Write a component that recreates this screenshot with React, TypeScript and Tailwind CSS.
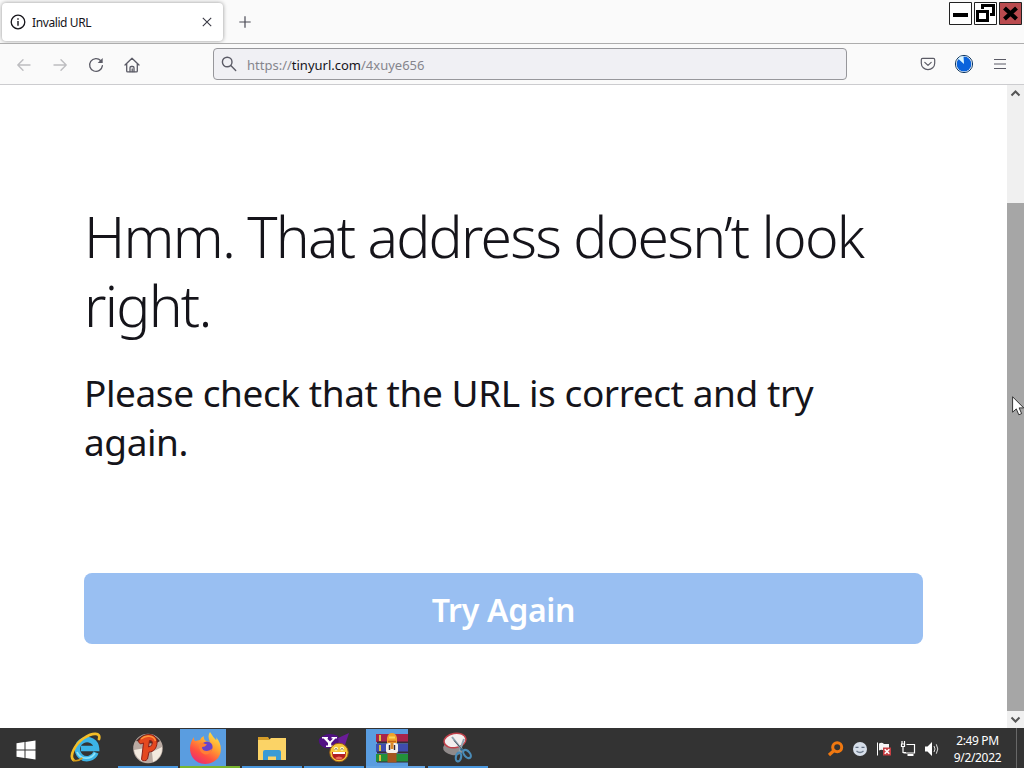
import type { ReactNode } from 'react';

function InfoIcon() {
  return (
    <svg width="16" height="16" viewBox="0 0 16 16" fill="none" stroke="#15141a" className="shrink-0">
      <circle cx="8" cy="8" r="6.8" strokeWidth="1.3" />
      <path d="M8 7v4.7M8 4.2v1.5" strokeWidth="1.4" />
    </svg>
  );
}

function ArrowIcon({ flip = false }: { flip?: boolean }) {
  return (
    <svg
      width="16"
      height="16"
      viewBox="0 0 16 16"
      fill="none"
      stroke="#bdbdc0"
      strokeWidth="1.4"
      strokeLinecap="round"
      strokeLinejoin="round"
      className={flip ? 'rotate-180' : ''}
    >
      <path d="M14 8H1.8M7 2.8L1.8 8 7 13.2" />
    </svg>
  );
}

function ReloadIcon() {
  return (
    <svg width="16" height="16" viewBox="0 0 16 16" fill="none" stroke="#5b5b66" strokeWidth="1.3" strokeLinecap="round">
      <path d="M12.8 3.7A6.4 6.4 0 1 0 14.4 8.6" />
      <path d="M14.7 1v5h-5z" fill="#5b5b66" stroke="none" />
    </svg>
  );
}

function HomeIcon() {
  return (
    <svg width="16" height="16" viewBox="0 0 16 16" fill="none" stroke="#5b5b66" strokeWidth="1.3" strokeLinejoin="round" strokeLinecap="round">
      <path d="M1 8l7-6.8L15 8M2.7 6.6v7.3q0 1 1 1h8.6q1 0 1-1V6.6" />
      <path d="M6 14.7v-4q0-1.2 1.2-1.2h1.6q1.2 0 1.2 1.2v4M8.2 12v2.7" />
    </svg>
  );
}

function SearchIcon() {
  return (
    <svg width="16" height="16" viewBox="0 0 16 16" fill="none" stroke="#5b5b66" strokeWidth="1.4" strokeLinecap="round">
      <circle cx="6.2" cy="6" r="4.8" />
      <path d="M9.8 9.6l4.9 4.9" />
    </svg>
  );
}

function PocketIcon() {
  return (
    <svg width="16" height="16" viewBox="0 0 16 16" fill="none" stroke="#5b5b66" strokeWidth="1.2" strokeLinecap="round" strokeLinejoin="round">
      <path d="M2.6 2.4h10.8q1.3 0 1.3 1.3v3.5a6.7 6.5 0 0 1-13.4 0V3.7q0-1.3 1.3-1.3z" />
      <path d="M4.8 6.4L8 9.4l3.2-3" />
    </svg>
  );
}

function ProfileIcon() {
  return (
    <svg width="20" height="20" viewBox="0 0 20 20">
      <circle cx="10" cy="10" r="8.6" fill="#fff" stroke="#123a63" strokeWidth="1" />
      <circle cx="10" cy="10" r="7.4" fill="#0a63dc" />
      <path d="M10 10L3.9 4.5A8 8 0 0 1 9.5 2.2z" fill="#d8f5ff" />
    </svg>
  );
}

function MenuIcon() {
  return (
    <svg width="14" height="12" viewBox="0 0 14 12" stroke="#5b5b66" strokeWidth="1.2">
      <path d="M1 1.5h12M1 6h12M1 10.5h12" />
    </svg>
  );
}

function WindowControls() {
  return (
    <svg width="74" height="24" viewBox="0 0 74 24" fill="none">
      <g stroke="#222" fill="#fff">
        <path d="M.5.5h22v22H.5zM25.5.5h22v22h-22z" />
        <path d="M50.5.5h22v22h-22z" fill="#ba4b4f" />
      </g>
      <path d="M4 13h15" stroke="#000" strokeWidth="4" />
      <g stroke="#000" strokeWidth="3">
        <path d="M33.5 7V3.5h11v9H41" />
        <path d="M28.5 9.5h10v9h-10z" fill="#fff" />
      </g>
      <path d="M55.5 6l12 11M67.5 6l-12 11" stroke="#000" strokeWidth="4.2" />
    </svg>
  );
}

function TabStrip() {
  return (
    <div className="flex h-[43px] shrink-0 items-start justify-between bg-[#fafafa]">
      <div className="flex items-center pt-[3px] pl-[2px]">
        <div className="flex h-[38px] w-[221px] items-center rounded-[4px] bg-white pr-[10px] pl-[8px] shadow-[0_0_4px_rgba(0,0,0,0.4)]">
          <InfoIcon />
          <span className="ml-[6px] flex-1 pt-px text-[12px] tracking-[-0.4px] text-[#15141a]">Invalid URL</span>
          <svg width="12" height="12" viewBox="0 0 12 12" stroke="#3a3944" strokeWidth="1.1">
            <path d="M1.8 1.8l8.4 8.4M10.2 1.8l-8.4 8.4" />
          </svg>
        </div>
        <svg width="12" height="12" viewBox="0 0 12 12" stroke="#4a4a55" strokeWidth="1.2" className="ml-[16px]">
          <path d="M6 .3v11.4M.3 6h11.4" />
        </svg>
      </div>
      <div className="pt-[2px] pr-[1px]">
        <WindowControls />
      </div>
    </div>
  );
}

function Toolbar() {
  return (
    <div className="flex h-[42px] shrink-0 items-center border-t border-b border-t-[#adadad] border-b-[#cccccf] bg-[#fafafa]">
      <div className="flex w-[213px] items-center gap-5 pt-px pl-[16px]">
        <ArrowIcon />
        <ArrowIcon flip />
        <ReloadIcon />
        <HomeIcon />
      </div>
      <div className="flex h-[32px] w-[634px] items-center rounded-[4px] border border-[#97979b] bg-[#f0f0f4] pl-[7px]">
        <SearchIcon />
        <span className="ml-[10px] pt-[3px] text-[13px] text-[#85858c]">
          https://<span className="text-[#15141a]">tinyurl.com</span>/4xuye656
        </span>
      </div>
      <div className="ml-[73px] flex items-center">
        <PocketIcon />
        <div className="ml-[18px]">
          <ProfileIcon />
        </div>
        <div className="ml-[19px]">
          <MenuIcon />
        </div>
      </div>
    </div>
  );
}

function Scrollbar() {
  return (
    <div className="flex w-[17px] flex-col items-center bg-[#f0f0f0]">
      <svg width="17" height="17" viewBox="0 0 17 17" fill="none" stroke="#555" strokeWidth="2">
        <path d="M4.5 10.5l4-4 4 4" />
      </svg>
      <div className="mt-[101px] h-[508px] w-full bg-[#a6a6a6]" />
      <svg width="17" height="17" viewBox="0 0 17 17" fill="none" stroke="#555" strokeWidth="2">
        <path d="M4.5 6.5l4 4 4-4" />
      </svg>
    </div>
  );
}

function ErrorPage() {
  return (
    <div className="flex-1 pt-[117px] pl-[84px]">
      <h1 className="w-[839px] text-[57px] leading-[69px] font-light tracking-[-1.75px] text-[#15141a]">
        Hmm. That address doesn’t look right.
      </h1>
      <p className="mt-[28px] w-[780px] text-[37px] leading-[49px] tracking-[-0.43px] text-[#15141a]">
        Please check that the URL is correct and try again.
      </p>
      <button className="mt-[107px] flex h-[71px] w-[839px] items-center justify-center rounded-[8px] bg-[#99bff2] pt-[3px] text-[32px] font-semibold tracking-[-0.3px] text-white">
        Try Again
      </button>
    </div>
  );
}

function StartIcon() {
  return (
    <svg width="20" height="20" viewBox="0 0 20 20" fill="#fff">
      <path d="M.5 3.2l8-1.2v7.4h-8zM9.5 1.9L19.5.4v9h-10zM.5 10.5h8V18l-8-1.2zM9.5 10.5h10v9.1l-10-1.5z" />
    </svg>
  );
}

function ExplorerIcon() {
  return (
    <svg width="32" height="32" viewBox="0 0 32 32" fill="none">
      <path d="M26 20.5A9.6 9.6 0 1 1 26.6 16.5H11" stroke="#3cb4e6" strokeWidth="5.4" />
      <path d="M25 21A10 10 0 0 1 7 20" stroke="#8be2f8" strokeWidth="1.8" />
      <path d="M3.4 28C-1 24 5 12 14 6S31 .5 29 7" stroke="#f4bd27" strokeWidth="2.7" strokeLinecap="round" />
      <path d="M3.4 28c3 2 7-.5 9-2" stroke="#d59a19" strokeWidth="1.6" />
    </svg>
  );
}

function PinballIcon() {
  return (
    <svg width="32" height="32" viewBox="0 0 32 32">
      <circle cx="16" cy="16.5" r="14.8" fill="#b9aaa2" />
      <path d="M2 18a14.6 14.6 0 0 0 11 12l0-14zM20 20l10-5a14.6 14.6 0 0 1-9 15z" fill="#f3eadf" />
      <path d="M4 9Q16-5 28 9l-5 3z" fill="#4e2f2a" />
      <path
        d="M7 8C13 0 25 1 25 10.500c0 6-4 9.500-8 9.500l-1.500 7q-3 3.500-6 .5l2-16.500-3 1q-3-2-1.500-4zM17.500 8.500l-1 6.500q4-.5 4-4.500-.5-2.500-3-2z"
        fill="#e4481f"
        stroke="#8c2018"
        fillRule="evenodd"
      />
      <path d="M9 7c5-4.500 13-3.500 14.500 2" fill="none" stroke="#ff9138" strokeWidth="1.6" />
    </svg>
  );
}

function FirefoxIcon() {
  return (
    <svg width="32" height="32" viewBox="0 0 32 32">
      <defs>
        <linearGradient id="fox" x1="0.85" y1="0" x2="0.25" y2="1">
          <stop offset="0" stopColor="#ffe94d" />
          <stop offset="0.4" stopColor="#ffa231" />
          <stop offset="0.72" stopColor="#ff5040" />
          <stop offset="1" stopColor="#e82a77" />
        </linearGradient>
      </defs>
      <path
        d="M4 5q-.3 3 1 4l5-1q1-3 4-4-1 3 2 5l4 1q-3-6 0-10 3 5 6 8 1-1 0-3c7 8 6 18 0 23-7 6-18 5-23-2S0 10 4 5z"
        fill="url(#fox)"
      />
      <circle cx="17" cy="15" r="5.6" fill="#6a43ca" />
      <path d="M9 12q3-2 5-.5l3 1q-2 2.500-5 2.500 0 4 5 4 3-.5 5-2.500-1 6-7 6-6-1-6-10.500z" fill="#ff7f36" />
    </svg>
  );
}

function FolderIcon() {
  return (
    <svg width="30" height="28" viewBox="0 0 30 28">
      <path d="M1 3h10l2 3H1z" fill="#d69d28" />
      <path d="M1 6h11l2-2h15v22H1z" fill="#fbd366" />
      <path d="M6 26v-8q0-2 2-2h14q2 0 2 2v8h-5v-3.5h-8V26z" fill="#3a9bd5" />
    </svg>
  );
}

function YahooIcon() {
  return (
    <svg width="32" height="32" viewBox="0 0 32 32">
      <path d="M1 7q8-8 19-3l1 8q-6 5-14 4Q0 13 1 7z" fill="#511183" />
      <path d="M20 6l11-5-4 12-6 1z" fill="#6a1c98" />
      <path d="M4 5h6v1.6H9l3 3 3-3h-1.5V5H19v1.6h-1.6L13.2 11v2.6h2V15H8v-1.4h2V11L5.6 6.6H4z" fill="#fff" />
      <circle cx="21" cy="20.5" r="9.3" fill="#f7c83a" stroke="#9a5c18" />
      <circle cx="18" cy="16.8" r="2" fill="#fff7c6" />
      <circle cx="24" cy="16.8" r="2" fill="#fff7c6" />
      <path d="M17 17.5q1-2 2 0M23 17.5q1-2 2 0" stroke="#33210e" fill="none" />
      <path d="M14 20h14q0 8-7 8t-7-8z" fill="#b31d20" />
      <path d="M15 20h12v2H15z" fill="#fff" />
      <path d="M17 26q4-3 8 0-4 3-8 0z" fill="#ed6b54" />
    </svg>
  );
}

function WinrarIcon() {
  return (
    <svg width="32" height="32" viewBox="0 0 32 32">
      <path d="M0 2h32v8H0z" fill="#a8254a" />
      <path d="M0 12h32v8H0z" fill="#3f4cae" />
      <path d="M0 22h32v8H0z" fill="#23913a" />
      <path d="M1 9.500h31v2H1zM1 19.500h31v2H1zM1 29.500h31v1H1z" fill="#3a2a38" />
      <path d="M4 3v6M4 13v6M4 23v6" stroke="#e0c03a" strokeWidth="2" />
      <path d="M11.500 19h9v11.500h-9z" fill="#a4561f" />
      <path d="M11 6q1-5 5-5t5 5v5H11z" fill="#f1a32c" />
      <path d="M13 5.500h6" stroke="#fbd55a" strokeWidth="2" />
      <path d="M12 9.500h8" stroke="#c46218" strokeWidth="1.500" />
      <path d="M10 13q0-2 3-2h6q3 0 3 2v6q0 2-2 2h-8q-2 0-2-2z" fill="#f4f0ea" />
      <path d="M13.500 13v5M18.500 13v5" stroke="#33293a" strokeWidth="1.400" />
      <path d="M16 11v6" stroke="#d8892c" strokeWidth="3" />
    </svg>
  );
}

function SnippingIcon() {
  return (
    <svg width="32" height="32" viewBox="0 0 32 32" fill="none">
      <ellipse cx="11" cy="17" rx="10" ry="6" fill="#908b8b" transform="rotate(10 11 17)" />
      <ellipse cx="13" cy="8.500" rx="11" ry="7.200" fill="#f3eeee" stroke="#c0404a" strokeWidth="1.500" transform="rotate(-10 13 8.500)" />
      <path d="M10 5l11 14M22 7l-5 14" stroke="#8fa3b0" strokeWidth="2" />
      <path d="M12 8.500l9 10" stroke="#505c66" />
      <ellipse cx="16.500" cy="25" rx="2.600" ry="4.500" stroke="#4a8cb8" strokeWidth="2.200" transform="rotate(12 16.500 25)" />
      <ellipse cx="25" cy="22" rx="2.800" ry="4.800" stroke="#4a8cb8" strokeWidth="2.200" transform="rotate(-42 25 22)" />
      <circle cx="19.500" cy="17.500" r="1.300" fill="#2f6387" />
    </svg>
  );
}

// Running apps carry an underline, the focused ones also get a filled tile.
const apps: { name: string; icon: ReactNode; tile: string; line: string }[] = [
  { name: 'ie', icon: <ExplorerIcon />, tile: 'pl-[14px]', line: 'w-[60px]' },
  { name: 'pinball', icon: <PinballIcon />, tile: 'pl-[14px]', line: 'w-[60px] bg-[#4a98df]' },
  { name: 'firefox', icon: <FirefoxIcon />, tile: 'w-[46px] bg-[#5a9de0] pl-[10px]', line: 'w-[60px] bg-[#79b52e]' },
  { name: 'files', icon: <FolderIcon />, tile: 'pl-[15px]', line: 'w-[60px] bg-[#4a98df]' },
  { name: 'yahoo', icon: <YahooIcon />, tile: 'pl-[14px]', line: 'w-[60px] bg-[#4a98df]' },
  { name: 'winrar', icon: <WinrarIcon />, tile: 'w-[42px] bg-[#5a9de0] pl-[10px]', line: 'w-[59px] bg-[#66a6e5]' },
  { name: 'snip', icon: <SnippingIcon />, tile: 'pl-[14px]', line: 'w-[60px] bg-[#4a98df]' },
];

function TrayIcons() {
  return (
    <svg width="114" height="20" viewBox="0 0 114 20" fill="none" className="mt-[2px]">
      <circle cx="9.2" cy="8.2" r="4.500" stroke="#f07810" strokeWidth="3" />
      <path d="M6 11.5l-5 4.5" stroke="#f07810" strokeWidth="3.2" />
      <circle cx="32" cy="10" r="7" fill="#d7dfea" />
      <path d="M27.5 8.3h3M33.5 8.3h3" stroke="#637083" strokeWidth="1.3" />
      <path d="M28.5 12q3.5 3 7 0" stroke="#6e7c8e" strokeWidth="1.3" />
      <path d="M49.5 3.5v13" stroke="#fff" />
      <path d="M51 4.5q3-1.5 5 .5h5v7h-5q-2-2-5-.5z" fill="#f5f5f5" />
      <path d="M55 8.5h8v8h-8z" fill="#c73e42" />
      <path d="M56.7 10.2l4.6 4.6M61.3 10.2l-4.6 4.6" stroke="#fff" strokeWidth="1.6" />
      <path d="M78.5 5.5h8v8.5h-11M73 5h4M74 2v3M76.5 2v3M73.5 5v2.5h3V5M75 8v5.5h3" stroke="#fff" strokeWidth="1.2" />
      <path d="M79.5 16h6" stroke="#fff" strokeWidth="2" />
      <path d="M97 7.5h2.5L104 3v14l-4.5-4.5H97z" fill="#fff" />
      <path d="M106 7q2 3 0 6M108.3 5.3q3 4.7 0 9.4" stroke="#ddd" />
    </svg>
  );
}

function Taskbar() {
  return (
    <div className="flex h-10 shrink-0 bg-[#333333] text-white">
      <div className="flex w-[56px] items-center pt-[3px] pl-[16px]">
        <StartIcon />
      </div>
      <div className="flex">
        {apps.map(app => (
          <div key={app.name} className="flex w-[62px] flex-col">
            <div className={`mt-px flex h-[37px] items-center overflow-hidden ${app.tile}`}>{app.icon}</div>
            <div className={`h-[2px] ${app.line}`} />
          </div>
        ))}
      </div>
      <div className="ml-auto flex w-[196px] items-center">
        <TrayIcons />
        <div className="w-[71px] pt-[2px] text-center text-[12px] leading-[17px] tracking-[-0.35px] whitespace-nowrap">
          <div>2:49 PM</div>
          <div>9/2/2022</div>
        </div>
        <div className="ml-[3px] h-full w-px bg-[#686868]" />
      </div>
    </div>
  );
}

export default function App() {
  return (
    <div className="relative flex h-[768px] w-[1024px] flex-col overflow-hidden bg-white font-['Noto_Sans','Open_Sans',sans-serif]">
      <TabStrip />
      <Toolbar />
      <div className="flex min-h-0 flex-1">
        <ErrorPage />
        <Scrollbar />
      </div>
      <Taskbar />
      {/* mouse pointer */}
      <svg width="12" height="20" viewBox="0 0 12 20" className="absolute top-[396px] left-[1012px]">
        <path d="M.6.8v15.4l3.7-3.3 2.5 5.9 2.8-1.2-2.5-5.7h4.6z" fill="#fff" stroke="#222" strokeWidth="0.9" />
      </svg>
    </div>
  );
}
